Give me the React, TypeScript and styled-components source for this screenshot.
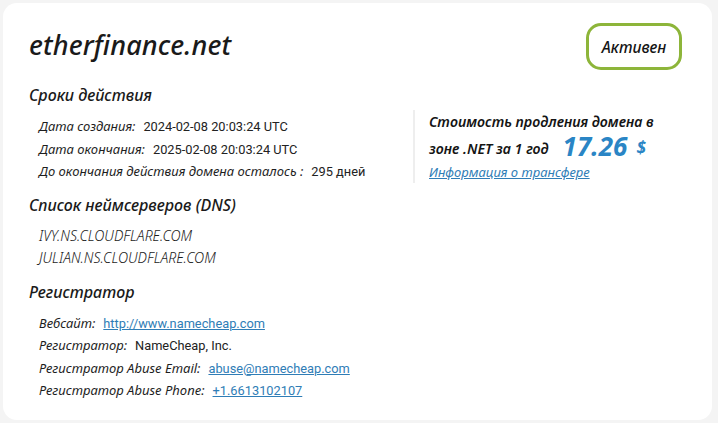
import * as React from 'react'
import styled, { createGlobalStyle } from 'styled-components'

// ---------------------------------------- [Page] ----------------------------------------
const GlobalStyle = createGlobalStyle`
    html, body {
        margin: 0;
        padding: 0;
        background: #f4f4f4;
    }
    body {
        font-family: "Noto Sans", "Open Sans", sans-serif;
        color: #1c1c1c;
    }
`

const Page = styled.div`
    box-sizing: border-box;
    width: 718px;
    height: 423px;
    padding: 3px 6px 3px 3px;
`

const Card = styled.main`
    box-sizing: border-box;
    height: 100%;
    background: #fff;
    border-radius: 14px;
    padding: 20px 30px 0 26px;
    display: flex;
    flex-direction: column;
    overflow: hidden;
`

// ---------------------------------------- [Header] ----------------------------------------
const Header = styled.header`
    display: flex;
    justify-content: space-between;
    align-items: center;
    height: 47px;
`

const DomainTitle = styled.h1`
    margin: 0 0 4px;
    font-size: 27px;
    font-style: italic;
    font-weight: 500;
    letter-spacing: 0.1px;
    color: #1a1a1a;
`

interface BadgeProps {
    $active?: boolean
}

const StatusBadge = styled.div<BadgeProps>`
    box-sizing: border-box;
    width: 96px;
    height: 47px;
    border: 3px solid ${(p) => (p.$active ? '#8db53a' : '#c94b4b')};
    border-radius: 15px;
    display: flex;
    align-items: center;
    justify-content: center;
    font-size: 15.5px;
    font-style: italic;
    font-weight: 500;
    color: #151515;
`

// ---------------------------------------- [Sections] ----------------------------------------
const TopRow = styled.div`
    display: flex;
    margin-top: 15px;
`

const LeftCol = styled.div`
    width: 383px;
`

const Section = styled.section`
    margin-bottom: 12px;
`

const SectionTitle = styled.h2`
    margin: 0 0 10px;
    height: 20px;
    line-height: 20px;
    font-size: 16px;
    font-style: italic;
    font-weight: 500;
    color: #1a1a1a;
`

const Rows = styled.div`
    padding-left: 10px;
`

const Row = styled.div`
    height: 22.5px;
    line-height: 22.5px;
    font-size: 13px;
    white-space: nowrap;
`

const Label = styled.span`
    font-style: italic;
    color: #1e1e1e;
    margin-right: 8px;
`

const Value = styled.span`
    font-family: Roboto, "Liberation Sans", sans-serif;
    font-size: 12.8px;
    color: #222;
`

const Link = styled.a`
    font-family: Roboto, "Liberation Sans", sans-serif;
    font-size: 12.8px;
    color: #2f7db6;
    text-decoration: underline;
`

const NsRow = styled(Row)`
    font-size: 14px;
    font-style: italic;
    font-weight: 300;
    color: #1c1c1c;
`

// ---------------------------------------- [Renewal price] ----------------------------------------
const PricePanel = styled.aside`
    margin-top: 25px;
    margin-left: 1px;
    height: 73px;
    border-left: 2px solid #eeeeee;
    padding-left: 14px;
    display: flex;
    flex-direction: column;
`

const PriceText = styled.div`
    font-size: 14.2px;
    font-style: italic;
    font-weight: 600;
    color: #151515;
    line-height: 24px;
    white-space: nowrap;
`

const PriceAmount = styled.span`
    font-size: 26px;
    font-weight: 700;
    font-style: italic;
    color: #2a85c5;
    margin-left: 14px;
    vertical-align: -2px;
`

const Currency = styled.span`
    font-size: 17px;
    font-weight: 700;
    font-style: italic;
    color: #2a85c5;
    margin-left: 9px;
`

const TransferLink = styled.a`
    font-size: 13px;
    font-style: italic;
    color: #2f7db6;
    text-decoration: underline;
    line-height: 22px;
`

const dates = [
    { label: 'Дата создания:', value: '2024-02-08 20:03:24 UTC' },
    { label: 'Дата окончания:', value: '2025-02-08 20:03:24 UTC' },
    { label: 'До окончания действия домена осталось :', value: '295 дней' },
]

const nameservers = ['IVY.NS.CLOUDFLARE.COM', 'JULIAN.NS.CLOUDFLARE.COM']

export default function App() {
    return (
        <Page>
            <GlobalStyle />
            <Card>
                <Header>
                    <DomainTitle>etherfinance.net</DomainTitle>
                    <StatusBadge $active>Активен</StatusBadge>
                </Header>

                <TopRow>
                    <LeftCol>
                        <Section>
                            <SectionTitle>Сроки действия</SectionTitle>
                            <Rows>
                                {dates.map((d) => (
                                    <Row key={d.label}>
                                        <Label>{d.label}</Label>
                                        <Value>{d.value}</Value>
                                    </Row>
                                ))}
                            </Rows>
                        </Section>
                    </LeftCol>
                    <PricePanel>
                        <PriceText>Стоимость продления домена в</PriceText>
                        <PriceText>
                            зоне .NET за 1 год
                            <PriceAmount>17.26</PriceAmount>
                            <Currency>$</Currency>
                        </PriceText>
                        <TransferLink href="#">Информация о трансфере</TransferLink>
                    </PricePanel>
                </TopRow>

                <Section>
                    <SectionTitle>Список неймсерверов (DNS)</SectionTitle>
                    <Rows>
                        {nameservers.map((ns) => (
                            <NsRow key={ns}>{ns}</NsRow>
                        ))}
                    </Rows>
                </Section>

                <Section>
                    <SectionTitle>Регистратор</SectionTitle>
                    <Rows>
                        <Row>
                            <Label>Вебсайт:</Label>
                            <Link href="#">http://www.namecheap.com</Link>
                        </Row>
                        <Row>
                            <Label>Регистратор:</Label>
                            <Value>NameCheap, Inc.</Value>
                        </Row>
                        <Row>
                            <Label>Регистратор Abuse Email:</Label>
                            <Link href="#">abuse@namecheap.com</Link>
                        </Row>
                        <Row>
                            <Label>Регистратор Abuse Phone:</Label>
                            <Link href="#">+1.6613102107</Link>
                        </Row>
                    </Rows>
                </Section>
            </Card>
        </Page>
    )
}
